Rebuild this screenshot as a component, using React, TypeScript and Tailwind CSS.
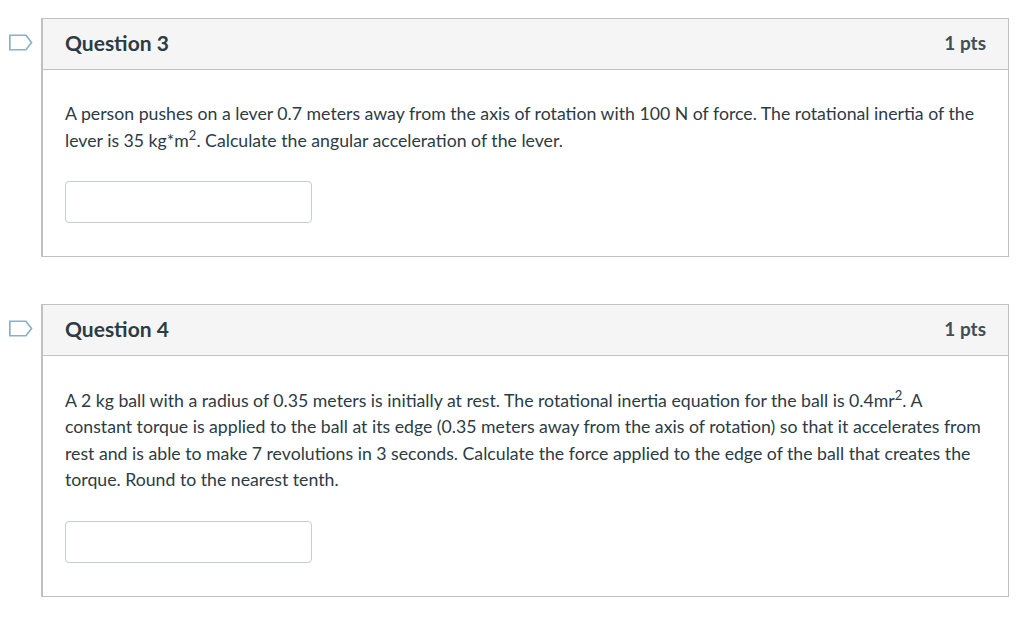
function FlagIcon() {
  return (
    <svg width="24" height="18" viewBox="0 0 24 18" fill="none" className="mt-[16px] ml-[9px] mr-[8px] shrink-0">
      <path d="M0.85 1.25H17L22.5 8.5L17 15.75H0.85Z" stroke="#8bb0c8" strokeWidth="1.7" />
    </svg>
  );
}

function Question({ title, children }: { title: string; children: React.ReactNode }) {
  return (
    <div className="flex items-start">
      <FlagIcon />
      <div className="w-[968px] border border-l-2 border-[#bfc1c3] bg-white">
        <div className="flex h-[50.5px] items-center justify-between border-b border-[#bfc1c3] bg-[#f5f5f5] px-[22px] pb-[2.5px]">
          <h2 className="text-[21px] font-bold text-[#2d3b45]">{title}</h2>
          <span className="mt-[0.5px] text-[19px] font-bold text-[#444d54]">1 pts</span>
        </div>
        <div className="px-[22px] pt-[31.7px] pb-[33.1px]">
          <div className="text-[17.7px] leading-[26.6px] text-[#2d3b45]">{children}</div>
          <input
            type="text"
            className="mt-[27px] block h-[42px] w-[247px] rounded-[4px] border border-[#c7cdd1] bg-white"
          />
        </div>
      </div>
    </div>
  );
}

export default function App() {
  return (
    <div className="min-h-[623px] bg-white pt-[18px] font-['Lato',sans-serif]">
      <div className="flex flex-col gap-[47px]">
        <Question title="Question 3">
          <p>
            A person pushes on a lever 0.7 meters away from the axis of rotation with 100 N of force. The rotational inertia of the lever is 35 kg*m<sup className="text-[13px] leading-none">2</sup>. Calculate the angular acceleration of the lever.
          </p>
        </Question>
        <Question title="Question 4">
          <p>
            A 2 kg ball with a radius of 0.35 meters is initially at rest. The rotational inertia equation for the ball is 0.4mr<sup className="text-[13px] leading-none">2</sup>. A constant torque is applied to the ball at its edge (0.35 meters away from the axis of rotation) so that it accelerates from rest and is able to make 7 revolutions in 3 seconds. Calculate the force applied to the edge of the ball that creates the torque. Round to the nearest tenth.
          </p>
        </Question>
      </div>
    </div>
  );
}
